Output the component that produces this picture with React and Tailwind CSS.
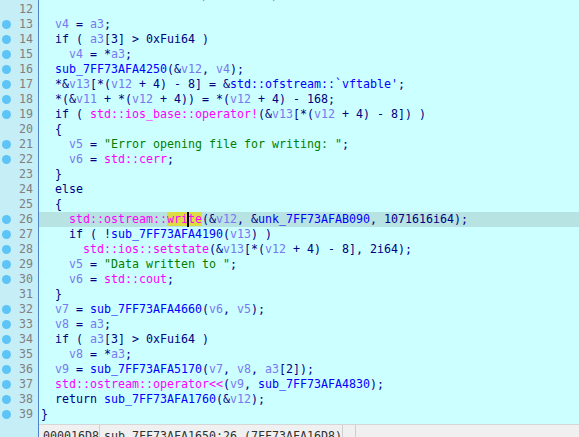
const COLORS = {
  d: 'text-[#000080]',
  v: 'text-[#7878f0]',
  f: 'text-[#0000ff]',
  m: 'text-[#ff00ff]',
  s: 'text-[#008000]',
  c: 'text-[#8080e8]',
};

// each line: [lineNo, hasDot, tokens]; token = [text, color]
const LINES = [
  [11, false, [['  char ', 'd'], ['v11', 'v'], ['[248]; ', 'd'], ['// [rsp+20h] [rbp-E0h] BYREF', 'c']]],
  [12, false, []],
  [13, true, [['  ', 'd'], ['v4', 'v'], [' = ', 'd'], ['a3', 'v'], [';', 'd']]],
  [14, true, [['  if ( ', 'd'], ['a3', 'v'], ['[3] > 0xFui64 )', 'd']]],
  [15, true, [['    ', 'd'], ['v4', 'v'], [' = *', 'd'], ['a3', 'v'], [';', 'd']]],
  [16, true, [['  ', 'd'], ['sub_7FF73AFA4250', 'f'], ['(&', 'd'], ['v12', 'v'], [', ', 'd'], ['v4', 'v'], [');', 'd']]],
  [17, true, [['  *&', 'd'], ['v13', 'v'], ['[*(', 'd'], ['v12', 'v'], [' + 4) - 8] = &', 'd'], ["std::ofstream::`vftable'", 'f'], [';', 'd']]],
  [18, true, [['  *(&', 'd'], ['v11', 'v'], [' + *(', 'd'], ['v12', 'v'], [' + 4)) = *(', 'd'], ['v12', 'v'], [' + 4) - 168;', 'd']]],
  [19, true, [['  if ( ', 'd'], ['std::ios_base::operator!', 'm'], ['(&', 'd'], ['v13', 'v'], ['[*(', 'd'], ['v12', 'v'], [' + 4) - 8]) )', 'd']]],
  [20, false, [['  {', 'd']]],
  [21, true, [['    ', 'd'], ['v5', 'v'], [' = ', 'd'], ['"Error opening file for writing: "', 's'], [';', 'd']]],
  [22, true, [['    ', 'd'], ['v6', 'v'], [' = ', 'd'], ['std::cerr', 'm'], [';', 'd']]],
  [23, false, [['  }', 'd']]],
  [24, false, [['  else', 'd']]],
  [25, false, [['  {', 'd']]],
  [26, true, 'cursor'],
  [27, true, [['    if ( !', 'd'], ['sub_7FF73AFA4190', 'f'], ['(', 'd'], ['v13', 'v'], [') )', 'd']]],
  [28, true, [['      ', 'd'], ['std::ios::setstate', 'm'], ['(&', 'd'], ['v13', 'v'], ['[*(', 'd'], ['v12', 'v'], [' + 4) - 8], 2i64);', 'd']]],
  [29, true, [['    ', 'd'], ['v5', 'v'], [' = ', 'd'], ['"Data written to "', 's'], [';', 'd']]],
  [30, true, [['    ', 'd'], ['v6', 'v'], [' = ', 'd'], ['std::cout', 'm'], [';', 'd']]],
  [31, false, [['  }', 'd']]],
  [32, true, [['  ', 'd'], ['v7', 'v'], [' = ', 'd'], ['sub_7FF73AFA4660', 'f'], ['(', 'd'], ['v6', 'v'], [', ', 'd'], ['v5', 'v'], [');', 'd']]],
  [33, true, [['  ', 'd'], ['v8', 'v'], [' = ', 'd'], ['a3', 'v'], [';', 'd']]],
  [34, true, [['  if ( ', 'd'], ['a3', 'v'], ['[3] > 0xFui64 )', 'd']]],
  [35, true, [['    ', 'd'], ['v8', 'v'], [' = *', 'd'], ['a3', 'v'], [';', 'd']]],
  [36, true, [['  ', 'd'], ['v9', 'v'], [' = ', 'd'], ['sub_7FF73AFA5170', 'f'], ['(', 'd'], ['v7', 'v'], [', ', 'd'], ['v8', 'v'], [', ', 'd'], ['a3', 'v'], ['[2]);', 'd']]],
  [37, true, [['  ', 'd'], ['std::ostream::operator<<', 'm'], ['(', 'd'], ['v9', 'v'], [', ', 'd'], ['sub_7FF73AFA4830', 'f'], [');', 'd']]],
  [38, true, [['  return ', 'd'], ['sub_7FF73AFA1760', 'f'], ['(&', 'd'], ['v12', 'v'], [');', 'd']]],
  [39, true, [['}', 'd']]],
];

const mono = { fontFamily: '"DejaVu Sans Mono", "Liberation Mono", monospace' };

const CursorLine = () => (
  <>
    <span className={COLORS.d}>{'    '}</span>
    <span className={COLORS.m}>std::ostream::</span>
    <span className="relative bg-[#dcdc44] text-[#ff00ff]">
      write
      <span className="absolute left-[20px] top-0 w-[2px] h-[15px] bg-black" />
    </span>
    <span className={COLORS.d}>(&amp;</span>
    <span className={COLORS.v}>v12</span>
    <span className={COLORS.d}>, &amp;</span>
    <span className={COLORS.f}>unk_7FF73AFAB090</span>
    <span className={COLORS.d}>, 1071616i64);</span>
  </>
);

export default function App() {
  return (
    <div
      className="w-[579px] h-[437px] overflow-hidden flex bg-[#ccffff] text-[11.63px] leading-[15px]"
      style={mono}
    >
      {/* gutter */}
      <div className="w-[39px] shrink-0 bg-[#c6eef7] border-r border-[#4a82cc] flex flex-col mt-[-13px]">
        {LINES.map(([n, dot]) => (
          <div key={n} className="h-[15px] flex items-center justify-between pl-[2px] pr-[5px]">
            <span className={`w-[9px] h-[9px] rounded-full ${dot ? 'bg-[#5cc4f6]' : ''}`} />
            <span className="text-[#808080]">{n}</span>
          </div>
        ))}
      </div>

      {/* code pane */}
      <div className="flex-1 flex flex-col min-w-0">
        <div className="flex flex-col mt-[-13px]">
          {LINES.map(([n, , tokens]) => (
            <div
              key={n}
              className={`h-[15px] pl-[2px] whitespace-pre ${n === 26 ? 'bg-[#b8e3e3]' : ''}`}
            >
              {tokens === 'cursor' ? (
                <CursorLine />
              ) : (
                tokens.map(([t, c], i) => (
                  <span key={i} className={COLORS[c]}>{t}</span>
                ))
              )}
            </div>
          ))}
        </div>

        {/* status bar */}
        <div className="mt-auto h-[13px] shrink-0 flex bg-[#f0f0f0] border-t border-[#d6d6d6] text-[#303030] whitespace-pre overflow-hidden">
          <div className="w-[61px] pl-[4px] pt-[4px] border-r border-[#cfcfcf]">000016D8</div>
          <div className="w-[243px] pl-[4px] pt-[4px] border-r border-[#cfcfcf]">sub_7FF73AFA1650:26 (7FF73AFA16D8)</div>
          <div className="w-[13px] border-r border-[#cfcfcf]" />
        </div>
      </div>
    </div>
  );
}
